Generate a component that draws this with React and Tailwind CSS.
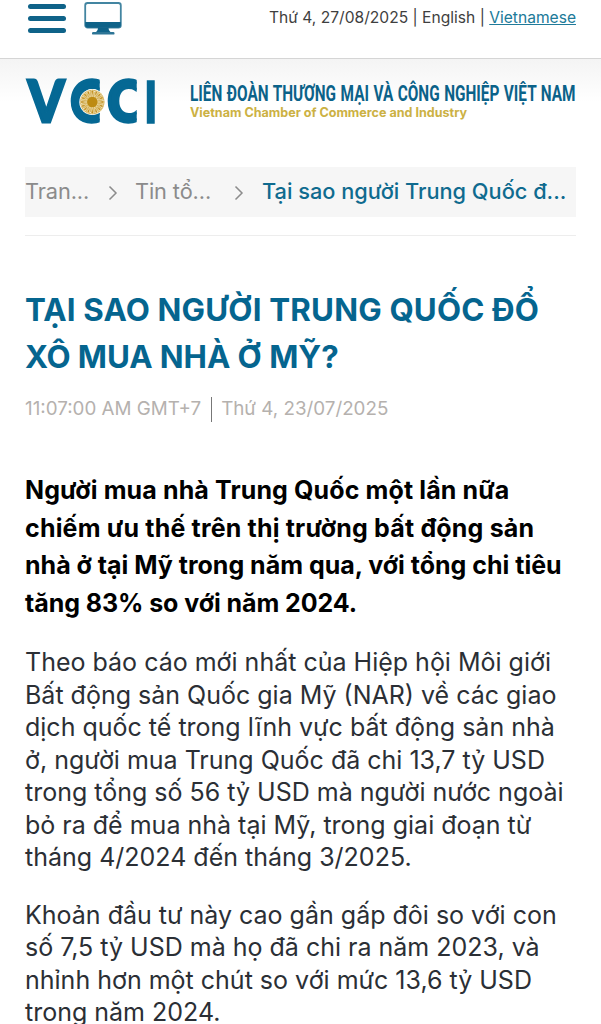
const crumbs = ['Tran...', 'Tin tổ...'];

const paragraphs = [
  [
    'Theo báo cáo mới nhất của Hiệp hội Môi giới',
    'Bất động sản Quốc gia Mỹ (NAR) về các giao',
    'dịch quốc tế trong lĩnh vực bất động sản nhà',
    'ở, người mua Trung Quốc đã chi 13,7 tỷ USD',
    'trong tổng số 56 tỷ USD mà người nước ngoài',
    'bỏ ra để mua nhà tại Mỹ, trong giai đoạn từ',
    'tháng 4/2024 đến tháng 3/2025.',
  ],
  [
    'Khoản đầu tư này cao gần gấp đôi so với con',
    'số 7,5 tỷ USD mà họ đã chi ra năm 2023, và',
    'nhỉnh hơn một chút so với mức 13,6 tỷ USD',
    'trong năm 2024.',
  ],
];

function Lines({ lines }) {
  return lines.map((line) => (
    <span key={line} className="block whitespace-nowrap">
      {line}
    </span>
  ));
}

function MonitorIcon() {
  return (
    <svg width="38" height="35" viewBox="0 0 38 35" aria-hidden="true">
      <rect x="1.200" y="2" width="35.600" height="24.600" rx="2.400" fill="#fff" stroke="#4385a1" strokeWidth="1.800" />
      <path d="M1.200 21h35.600v3.300a2.400 2.400 0 0 1-2.400 2.400H3.600a2.400 2.400 0 0 1-2.400-2.400z" fill="#0f6389" />
      <path d="M14 26.500h10.500c0 2.500 1 4 3 5h-16.500c2-1 3-2.500 3-5z" fill="#0f6389" />
      <rect x="8" y="31" width="22.500" height="2.600" rx="1.200" fill="#2d7596" />
    </svg>
  );
}

function Logo() {
  const rays = Array.from({ length: 16 }, (_, i) => i * 22.5);
  return (
    <svg width="134" height="78" viewBox="0 0 134 78" aria-label="VCCI">
      <defs>
        <clipPath id="first-c">
          <rect x="42" y="0" width="32.700" height="78" />
        </clipPath>
        <clipPath id="second-c">
          <rect x="80" y="0" width="31.700" height="78" />
        </clipPath>
      </defs>
      <g fill="#056894" stroke="#056894" fontFamily="Lato, sans-serif" fontWeight="900" fontSize="57">
        <text x="3" y="60" strokeWidth="3" textLength="36.500" lengthAdjust="spacingAndGlyphs">V</text>
        <g clipPath="url(#first-c)">
          <text x="45.500" y="59.500" strokeWidth="3.500" textLength="36" lengthAdjust="spacingAndGlyphs">C</text>
        </g>
        <g clipPath="url(#second-c)">
          <text x="82.500" y="59.500" strokeWidth="3.500" textLength="35.500" lengthAdjust="spacingAndGlyphs">C</text>
        </g>
        <text x="119" y="60.500" strokeWidth="1.500" textLength="13.500" lengthAdjust="spacingAndGlyphs">I</text>
      </g>
      <circle cx="67.300" cy="40" r="13" fill="#fff" />
      <circle cx="67.300" cy="40" r="12.200" fill="#d5b45c" />
      <circle cx="67.300" cy="40" r="10.800" fill="none" stroke="#fff" strokeWidth="0.800" strokeDasharray="1.400 1.200" />
      {rays.map((angle) => (
        <path
          key={angle}
          d="M67.300 35l1.200-5.500-1.200-2-1.200 2z"
          fill="#c2901f"
          stroke="#f7edcf"
          strokeWidth="0.500"
          transform={`rotate(${angle} 67.300 40)`}
        />
      ))}
      <circle cx="67.300" cy="40" r="5.200" fill="#bd8b12" />
    </svg>
  );
}

function TopBar() {
  return (
    <header className="flex h-[59px] items-start justify-between border-b border-[#d5d5d5] bg-white pr-[25px] pl-7">
      <div className="flex items-start gap-[18px]">
        <button aria-label="Menu" className="mt-1 flex w-[38px] flex-col gap-[7px]">
          <span className="h-[5px] w-full rounded-full bg-[#0f6389]" />
          <span className="h-[5px] w-full rounded-full bg-[#0f6389]" />
          <span className="h-[5px] w-full rounded-full bg-[#0f6389]" />
        </button>
        <div className="mt-px">
          <MonitorIcon />
        </div>
      </div>
      <div className="mt-1.5 text-[15.6px] leading-6 whitespace-nowrap text-[#3f3f3f]">
        Thứ 4, 27/08/2025 | English |{' '}
        <a href="#" className="text-[#207a99] underline">
          Vietnamese
        </a>
      </div>
    </header>
  );
}

function Brand() {
  return (
    <div className="flex h-[108px] items-start bg-linear-to-b from-[#f4f4f4] to-white to-40% pt-[3px] pl-[25px]">
      <Logo />
      <svg width="390" height="50" viewBox="0 0 390 50" className="mt-4 ml-[29px]">
        <text
          x="2"
          y="23"
          textLength="385.500"
          lengthAdjust="spacingAndGlyphs"
          wordSpacing="1"
          fontFamily="Roboto, sans-serif"
          fontWeight="700"
          fontSize="22"
          fill="#0b6289"
        >
          LIÊN ĐOÀN THƯƠNG MẠI VÀ CÔNG NGHIỆP VIỆT NAM
        </text>
        <text
          x="2"
          y="39"
          textLength="277"
          lengthAdjust="spacingAndGlyphs"
          fontFamily="Inter, sans-serif"
          fontWeight="700"
          fontSize="12.500"
          fill="#ccb143"
        >
          Vietnam Chamber of Commerce and Industry
        </text>
      </svg>
    </div>
  );
}

function Chevron() {
  return (
    <svg width="10" height="16" viewBox="0 0 10 16" fill="none" stroke="#8c8c8c" strokeWidth="1.500" aria-hidden="true">
      <path d="M1.500 1.500L8 8l-6.500 6.500" />
    </svg>
  );
}

function Breadcrumb() {
  return (
    <nav className="mx-[25px] flex h-[50px] items-center bg-[#f6f6f6] pb-px text-[21.75px] whitespace-nowrap text-[#8b8b8b]">
      <span className="w-[83px] tracking-[-0.1px]">{crumbs[0]}</span>
      <span className="mt-[3px] w-[27px]">
        <Chevron />
      </span>
      <span className="w-[99px] tracking-[-0.1px]">{crumbs[1]}</span>
      <span className="mt-[3px] w-[28px]">
        <Chevron />
      </span>
      <span className="font-medium text-[#0f6b8f]">Tại sao người Trung Quốc đ...</span>
    </nav>
  );
}

export default function App() {
  return (
    <div className="h-[1024px] overflow-hidden bg-white font-['Inter',sans-serif]">
      <TopBar />
      <Brand />
      <Breadcrumb />
      <hr className="mx-[25px] mt-[18px] border-[#ededed]" />

      <main className="px-[25px]">
        <h1 className="mt-[51px] text-[31.3px] leading-[47px] font-bold whitespace-nowrap text-[#05658f]">
          <span className="block tracking-[0.16px]">TẠI SAO NGƯỜI TRUNG QUỐC ĐỔ</span>
          <span className="block tracking-[-0.06px]">XÔ MUA NHÀ Ở MỸ?</span>
        </h1>
        <div className="mt-[14px] flex h-7 items-center text-[18.8px] whitespace-nowrap text-[#b5b1ae]">
          <span>11:07:00 AM GMT+7</span>
          <span className="mr-[9px] ml-[10px] h-[25px] w-px bg-[#777]" />
          <span>Thứ 4, 23/07/2025</span>
        </div>

        <div className="mt-[49px] text-[25px] leading-[37.5px] font-bold whitespace-nowrap text-black">
          <span className="block tracking-[0.12px]">Người mua nhà Trung Quốc một lần nữa</span>
          <span className="block tracking-[0.18px]">chiếm ưu thế trên thị trường bất động sản</span>
          <span className="block">nhà ở tại Mỹ trong năm qua, với tổng chi tiêu</span>
          <span className="block tracking-[-0.07px]">tăng 83% so với năm 2024.</span>
        </div>
        <div className="mt-6 flex flex-col gap-[25px] text-[25px] leading-[32.5px] text-[#2b2f35]">
          {paragraphs.map((lines) => (
            <p key={lines[0]}>
              <Lines lines={lines} />
            </p>
          ))}
        </div>
      </main>
    </div>
  );
}
